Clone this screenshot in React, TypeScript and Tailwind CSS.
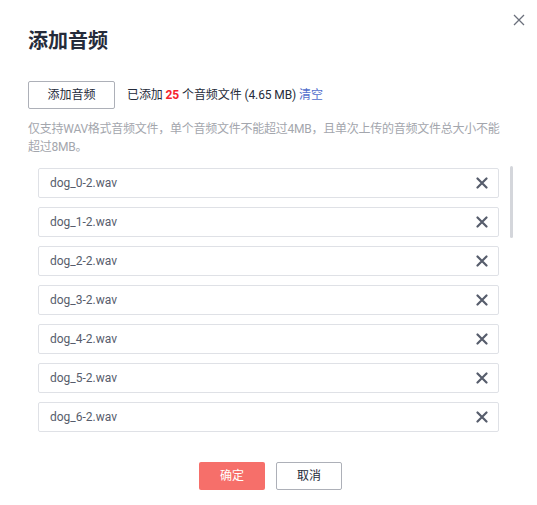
import React from "react";

const files = Array.from({ length: 25 }, (_, i) => `dog_${i}-2.wav`);

function BoldX() {
  return (
    <svg width="12" height="12" viewBox="0 0 12 12" fill="none">
      <path d="M1.5 1.5L10.5 10.5M10.5 1.5L1.5 10.5" stroke="#575d6c" strokeWidth="2.2" strokeLinecap="round" />
    </svg>
  );
}

export default function App() {
  return (
    <div
      className="relative w-[537px] h-[505px] bg-white overflow-hidden text-[#252b3a]"
      style={{ fontFamily: 'Roboto, "Noto Sans CJK SC", "Noto Sans", sans-serif' }}
    >
      <button className="absolute right-[11px] top-[13px] w-[14px] h-[14px] flex items-center justify-center">
        <svg width="12" height="12" viewBox="0 0 12 12" fill="none">
          <path d="M1 1L11 11M11 1L1 11" stroke="#6b707c" strokeWidth="1.3" />
        </svg>
      </button>

      <div className="pl-[28px] pt-[27px]">
        <h1 className="text-[20px] leading-[28px] font-bold text-[#252b3a]">添加音频</h1>

        <div className="mt-[26px] flex items-center h-[28px]">
          <button className="w-[87px] h-[28px] border border-[#adb0b8] rounded-[2px] text-[12px] text-[#252b3a] bg-white">
            添加音频
          </button>
          <span className="ml-[12px] text-[12px] tracking-[-0.1px] text-[#252b3a]">
            已添加 <span className="font-bold text-[#f5222d]">25</span> 个音频文件 (4.65 MB){" "}
            <span className="text-[#526ecc]">清空</span>
          </span>
        </div>

        <p className="mt-[11px] w-[478px] text-[12px] leading-[18px] tracking-[-0.25px] text-[#a3a6ad]">
          仅支持WAV格式音频文件，单个音频文件不能超过4MB，且单次上传的音频文件总大小不能超过8MB。
        </p>

        <div className="mt-[10px] flex h-[267px]">
          <div className="ml-[10px] w-[461px] h-[267px] overflow-y-auto [scrollbar-width:none] pt-[2px] flex flex-col gap-[9px]">
            {files.map((f) => (
              <div
                key={f}
                className="shrink-0 h-[30px] border border-[#dfe1e6] rounded-[2px] flex items-center justify-between pl-[11px] pr-[10px]"
              >
                <span className="text-[12px] text-[#575d6c]">{f}</span>
                <BoldX />
              </div>
            ))}
          </div>
          <div className="ml-[11px] w-[3px] h-[267px]">
            <div className="w-[3px] h-[72px] bg-[#d4d6db] rounded-full" />
          </div>
        </div>
      </div>

      <div className="mt-[29px] flex justify-center gap-[11px] pl-[4px]">
        <button className="w-[66px] h-[28px] rounded-[2px] bg-[#f66f6a] text-white text-[12px]">确定</button>
        <button className="w-[66px] h-[28px] rounded-[2px] border border-[#adb0b8] bg-white text-[12px] text-[#252b3a]">
          取消
        </button>
      </div>
    </div>
  );
}
